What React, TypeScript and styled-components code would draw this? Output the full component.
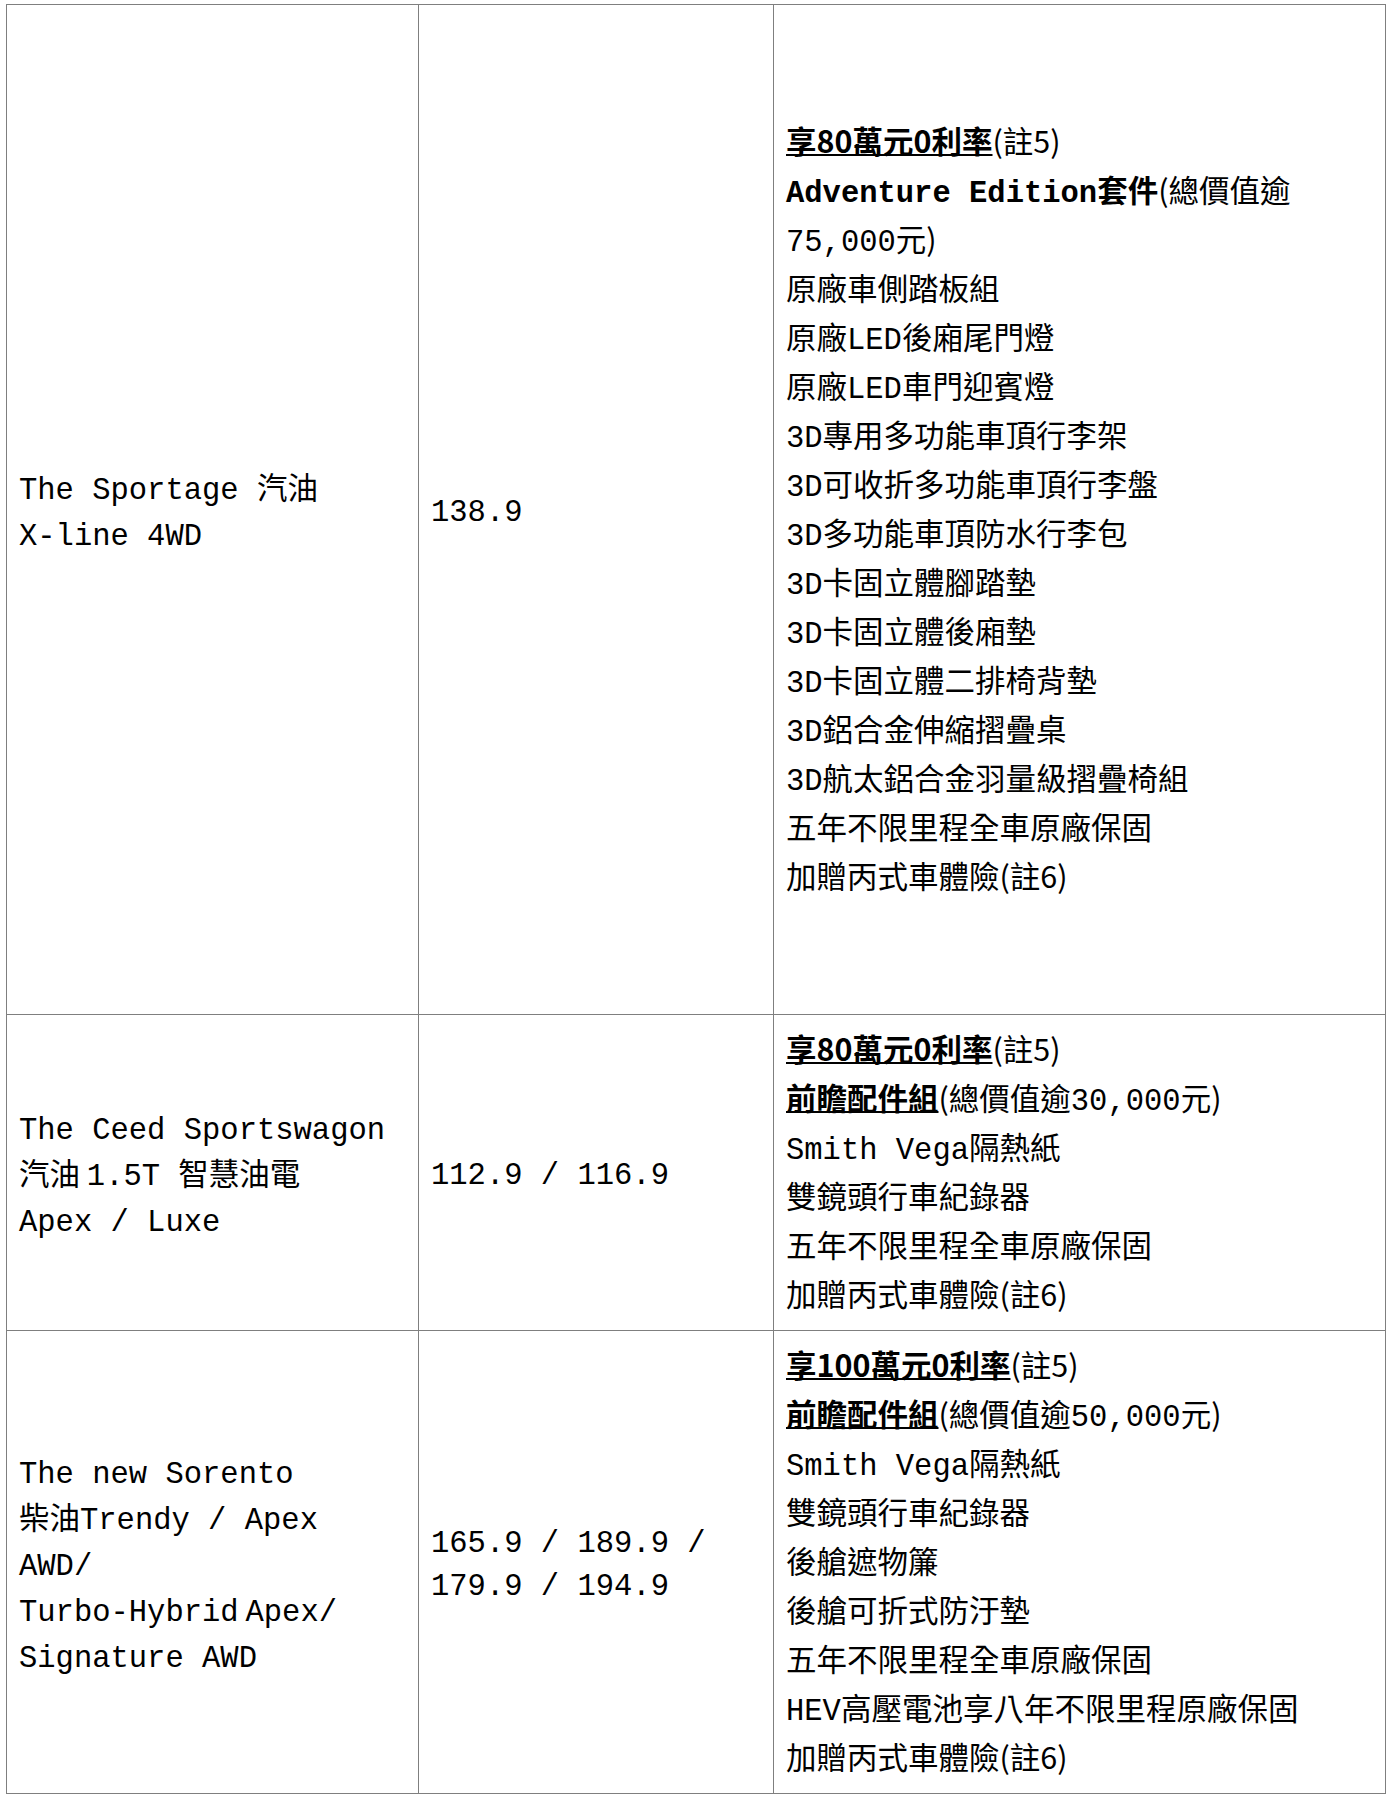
import React from 'react';
import styled, { createGlobalStyle } from 'styled-components';

const MONO = `"Liberation Mono", "Noto Sans CJK TC", monospace`;
const CJK = `"Noto Sans CJK TC", "Noto Sans CJK SC", sans-serif`;

const GlobalStyle = createGlobalStyle`
  html, body { margin: 0; padding: 0; background: #ffffff; }
  body { color: #000000; font-family: ${CJK}; }
`;

const Page = styled.div`
  padding: 4px 4px 6px 6px;
`;

const Table = styled.table`
  border-collapse: collapse;
  table-layout: fixed;
  width: 1379px;
  font-size: 30.5px;
  color: #000;
`;

const Col = styled.col<{ $w: number }>`
  width: ${(p) => p.$w}px;
`;

const Row = styled.tr<{ $h?: number }>`
  ${(p) => (p.$h ? `height: ${p.$h}px;` : '')}
`;

const Cell = styled.td<{ $padTop?: number; $padBottom?: number }>`
  border: 1px solid #7f7f7f;
  padding: ${(p) => p.$padTop ?? 14}px 12px ${(p) => p.$padBottom ?? 7}px 12px;
  vertical-align: middle;
`;

const Line = styled.div<{ $lh: number; $base: 'mono' | 'cjk' }>`
  height: ${(p) => p.$lh}px;
  line-height: ${(p) => p.$lh}px;
  white-space: nowrap;
  font-family: ${(p) => (p.$base === 'mono' ? MONO : CJK)};
`;

const Mono = styled.span<{ $bold?: boolean }>`
  font-family: ${MONO};
  font-weight: ${(p) => (p.$bold ? 700 : 400)};
`;

const Han = styled.span<{ $bold?: boolean; $under?: boolean }>`
  font-family: ${CJK};
  font-weight: ${(p) => (p.$bold ? 700 : 400)};
  text-decoration: ${(p) => (p.$under ? 'underline' : 'none')};
  text-decoration-thickness: 2px;
`;

type Seg = { t: string; f: 'm' | 'c'; b?: boolean; u?: boolean };
const m = (t: string): Seg => ({ t, f: 'm' });
const mb = (t: string): Seg => ({ t, f: 'm', b: true });
const c = (t: string): Seg => ({ t, f: 'c' });
const cb = (t: string): Seg => ({ t, f: 'c', b: true });
const cu = (t: string): Seg => ({ t, f: 'c', b: true, u: true });

type RowData = {
  height?: number;
  model: Seg[][];
  price: string[];
  gifts: Seg[][];
};

const rows: RowData[] = [
  {
    height: 1010,
    model: [[m('The Sportage '), c('汽油')], [m('X-line 4WD')]],
    price: ['138.9'],
    gifts: [
      [cu('享80萬元0利率'), c('(註5)')],
      [mb('Adventure Edition'), cb('套件'), c('(總價值逾')],
      [m('75,000'), c('元)')],
      [c('原廠車側踏板組')],
      [c('原廠'), m('LED'), c('後廂尾門燈')],
      [c('原廠'), m('LED'), c('車門迎賓燈')],
      [m('3D'), c('專用多功能車頂行李架')],
      [m('3D'), c('可收折多功能車頂行李盤')],
      [m('3D'), c('多功能車頂防水行李包')],
      [m('3D'), c('卡固立體腳踏墊')],
      [m('3D'), c('卡固立體後廂墊')],
      [m('3D'), c('卡固立體二排椅背墊')],
      [m('3D'), c('鋁合金伸縮摺疊桌')],
      [m('3D'), c('航太鋁合金羽量級摺疊椅組')],
      [c('五年不限里程全車原廠保固')],
      [c('加贈丙式車體險(註6)')],
    ],
  },
  {
    model: [
      [m('The Ceed Sportswagon')],
      [c('汽油 '), m('1.5T '), c('智慧油電')],
      [m('Apex / Luxe')],
    ],
    price: ['112.9 / 116.9'],
    gifts: [
      [cu('享80萬元0利率'), c('(註5)')],
      [cu('前瞻配件組'), c('(總價值逾'), m('30,000'), c('元)')],
      [m('Smith Vega'), c('隔熱紙')],
      [c('雙鏡頭行車紀錄器')],
      [c('五年不限里程全車原廠保固')],
      [c('加贈丙式車體險(註6)')],
    ],
  },
  {
    model: [
      [m('The new Sorento')],
      [c('柴油'), m('Trendy / Apex')],
      [m('AWD/')],
      [m('Turbo-Hybrid'), c(' '), m('Apex/')],
      [m('Signature AWD')],
    ],
    price: ['165.9 / 189.9 /', '179.9 / 194.9'],
    gifts: [
      [cu('享100萬元0利率'), c('(註5)')],
      [cu('前瞻配件組'), c('(總價值逾'), m('50,000'), c('元)')],
      [m('Smith Vega'), c('隔熱紙')],
      [c('雙鏡頭行車紀錄器')],
      [c('後艙遮物簾')],
      [c('後艙可折式防汙墊')],
      [c('五年不限里程全車原廠保固')],
      [m('HEV'), c('高壓電池享八年不限里程原廠保固')],
      [c('加贈丙式車體險(註6)')],
    ],
  },
];

const Segments: React.FC<{ segs: Seg[] }> = ({ segs }) => (
  <>
    {segs.map((s, i) =>
      s.f === 'm' ? (
        <Mono key={i} $bold={s.b}>
          {s.t}
        </Mono>
      ) : (
        <Han key={i} $bold={s.b} $under={s.u}>
          {s.t}
        </Han>
      )
    )}
  </>
);

export default function App() {
  return (
    <>
      <GlobalStyle />
      <Page>
        <Table>
          <colgroup>
            <Col $w={412} />
            <Col $w={355} />
            <Col $w={612} />
          </colgroup>
          <tbody>
            {rows.map((r, ri) => (
              <Row key={ri} $h={r.height}>
                <Cell $padTop={10} $padBottom={11}>
                  {r.model.map((segs, i) => (
                    <Line key={i} $lh={46} $base="cjk">
                      <Segments segs={segs} />
                    </Line>
                  ))}
                </Cell>
                <Cell>
                  {r.price.map((p, i) => (
                    <Line key={i} $lh={43} $base="mono">
                      <Mono>{p}</Mono>
                    </Line>
                  ))}
                </Cell>
                <Cell $padTop={9} $padBottom={12}>
                  {r.gifts.map((segs, i) => (
                    <Line key={i} $lh={49} $base="cjk">
                      <Segments segs={segs} />
                    </Line>
                  ))}
                </Cell>
              </Row>
            ))}
          </tbody>
        </Table>
      </Page>
    </>
  );
}
